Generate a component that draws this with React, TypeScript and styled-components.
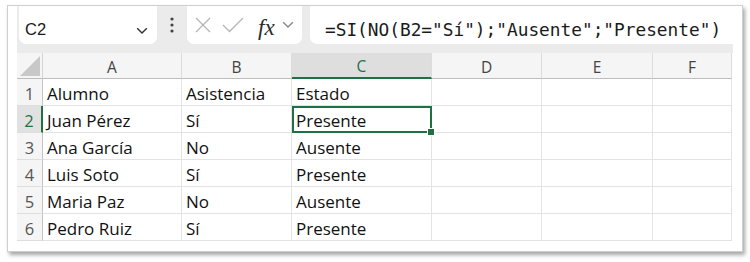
import styled, { createGlobalStyle } from "styled-components";

const GlobalStyle = createGlobalStyle`
  html, body {
    margin: 0;
    padding: 0;
    background: #ffffff;
  }
  body {
    font-family: "Open Sans", "Liberation Sans", sans-serif;
  }
`;

const Page = styled.div`
  width: 750px;
  height: 262px;
  padding: 5px 0 0 7px;
  box-sizing: border-box;
`;

const Window = styled.div`
  width: 736px;
  height: 247px;
  box-sizing: border-box;
  background: #ffffff;
  border: 1px solid #cfcfcf;
  box-shadow: 2px 3px 4px rgba(0, 0, 0, 0.35);
  padding: 0 9px 10px 9px;
  display: flex;
  flex-direction: column;
`;

const Toolbar = styled.div`
  height: 47px;
  background: #ebebeb;
  display: flex;
  align-items: flex-start;
  padding-left: 2px;
`;

const Box = styled.div<{ $w?: number }>`
  height: 38px;
  background: #ffffff;
  border-radius: 0 0 7px 7px;
  display: flex;
  align-items: center;
  box-sizing: border-box;
  ${(p) => (p.$w ? `width: ${p.$w}px;` : "flex: 1;")}
`;

const NameText = styled.span`
  font-family: "Liberation Sans", sans-serif;
  font-size: 16.5px;
  color: #1a1a1a;
  margin: 8px 0 0 6px;
  flex: 1;
`;

const Grip = styled.div`
  width: 30px;
  height: 38px;
  display: flex;
  align-items: center;
  justify-content: center;
`;

const FxIcons = styled.div`
  display: flex;
  align-items: center;
  padding-left: 7px;
  gap: 10px;
`;

const FxLabel = styled.span`
  font-family: "Liberation Serif", serif;
  font-style: italic;
  font-size: 23px;
  color: #2b2b2b;
  margin: 5px -3px 0 4px;
`;

const FormulaBox = styled(Box)`
  margin-left: 8px;
  padding-left: 15px;
  border-radius: 0 0 0 7px;
`;

const Formula = styled.span`
  font-family: "DejaVu Sans Mono", "Liberation Mono", monospace;
  font-size: 17.8px;
  color: #1a1a1a;
  white-space: nowrap;
  margin-top: 8px;
`;

const Grid = styled.div`
  display: grid;
  grid-template-columns: 26px 139px 110px 140px 110px 111px 79px;
  grid-template-rows: 26px repeat(6, 27px);
`;

const Corner = styled.div`
  background: #f5f5f5;
  border-right: 1px solid #d4d4d4;
  border-bottom: 1px solid #bdbdbd;
  position: relative;
  svg {
    position: absolute;
    right: 2px;
    bottom: 2px;
  }
`;

const ColHead = styled.div<{ $sel?: boolean }>`
  background: ${(p) => (p.$sel ? "#dedede" : "#f5f5f5")};
  border-right: 1px solid #dcdcdc;
  border-bottom: ${(p) => (p.$sel ? "2px solid #1e7145" : "1px solid #bdbdbd")};
  color: ${(p) => (p.$sel ? "#1e7145" : "#444444")};
  font-size: 15.5px;
  display: flex;
  align-items: flex-end;
  justify-content: center;
  box-sizing: border-box;
`;

const RowHead = styled.div<{ $sel?: boolean }>`
  background: ${(p) => (p.$sel ? "#e1e1e1" : "#f5f5f5")};
  border-right: ${(p) => (p.$sel ? "2px solid #1e7145" : "1px solid #c4c4c4")};
  border-bottom: 1px solid #dedede;
  color: ${(p) => (p.$sel ? "#1e7145" : "#555555")};
  font-size: 16.5px;
  display: flex;
  align-items: flex-end;
  justify-content: center;
  box-sizing: border-box;
`;

const Cell = styled.div<{ $sel?: boolean }>`
  border-right: 1px solid #e3e3e3;
  border-bottom: 1px solid #e3e3e3;
  font-size: 17px;
  color: #111111;
  display: flex;
  align-items: flex-end;
  padding: 0 0 0 4px;
  box-sizing: border-box;
  white-space: nowrap;
  position: relative;
  ${(p) =>
    p.$sel &&
    `
    outline: 2px solid #1e7145;
    outline-offset: -2px;
    z-index: 1;
  `}
`;

const Handle = styled.span`
  position: absolute;
  right: -4px;
  bottom: -4px;
  width: 6px;
  height: 6px;
  background: #1e7145;
  border: 1px solid #ffffff;
`;

const rows = [
  ["Alumno", "Asistencia", "Estado"],
  ["Juan Pérez", "Sí", "Presente"],
  ["Ana García", "No", "Ausente"],
  ["Luis Soto", "Sí", "Presente"],
  ["Maria Paz", "No", "Ausente"],
  ["Pedro Ruiz", "Sí", "Presente"],
];

const cols = ["A", "B", "C", "D", "E", "F"];

function Chevron({ color, size }: { color: string; size: number }) {
  return (
    <svg width={size} height={size * 0.6} viewBox="0 0 10 6">
      <path d="M1 1 L5 5 L9 1" fill="none" stroke={color} strokeWidth="1.2" />
    </svg>
  );
}

export default function App() {
  return (
    <>
      <GlobalStyle />
      <Page>
        <Window>
          <Toolbar>
            <Box $w={138}>
              <NameText>C2</NameText>
              <span style={{ marginRight: 9, marginTop: 6 }}>
                <Chevron color="#333" size={12} />
              </span>
            </Box>
            <Grip>
              <svg width="4" height="16" viewBox="0 0 4 16">
                <circle cx="2" cy="2" r="1.6" fill="#444" />
                <circle cx="2" cy="8" r="1.6" fill="#444" />
                <circle cx="2" cy="14" r="1.6" fill="#444" />
              </svg>
            </Grip>
            <Box $w={115}>
              <FxIcons>
                <svg width="18" height="18" viewBox="0 0 18 18">
                  <path d="M2 2 L16 16 M16 2 L2 16" stroke="#b5b5b5" strokeWidth="1.3" fill="none" />
                </svg>
                <svg width="22" height="16" viewBox="0 0 22 16">
                  <path d="M1 8 L7.5 14.5 L21 1" stroke="#b5b5b5" strokeWidth="1.3" fill="none" />
                </svg>
                <FxLabel>fx</FxLabel>
                <Chevron color="#8a8a8a" size={12} />
              </FxIcons>
            </Box>
            <FormulaBox>
              <Formula>=SI(NO(B2="Sí");"Ausente";"Presente")</Formula>
            </FormulaBox>
          </Toolbar>
          <Grid>
            <Corner>
              <svg width="20" height="20" viewBox="0 0 20 20">
                <path d="M20 0 L20 20 L0 20 Z" fill="#c8c8c8" />
              </svg>
            </Corner>
            {cols.map((c) => (
              <ColHead key={c} $sel={c === "C"}>
                {c}
              </ColHead>
            ))}
            {rows.map((r, i) => (
              <>
                <RowHead key={`h${i}`} $sel={i === 1}>
                  {i + 1}
                </RowHead>
                {cols.map((c, j) => (
                  <Cell key={`${i}${c}`} $sel={i === 1 && j === 2}>
                    {r[j] ?? ""}
                    {i === 1 && j === 2 && <Handle />}
                  </Cell>
                ))}
              </>
            ))}
          </Grid>
        </Window>
      </Page>
    </>
  );
}
